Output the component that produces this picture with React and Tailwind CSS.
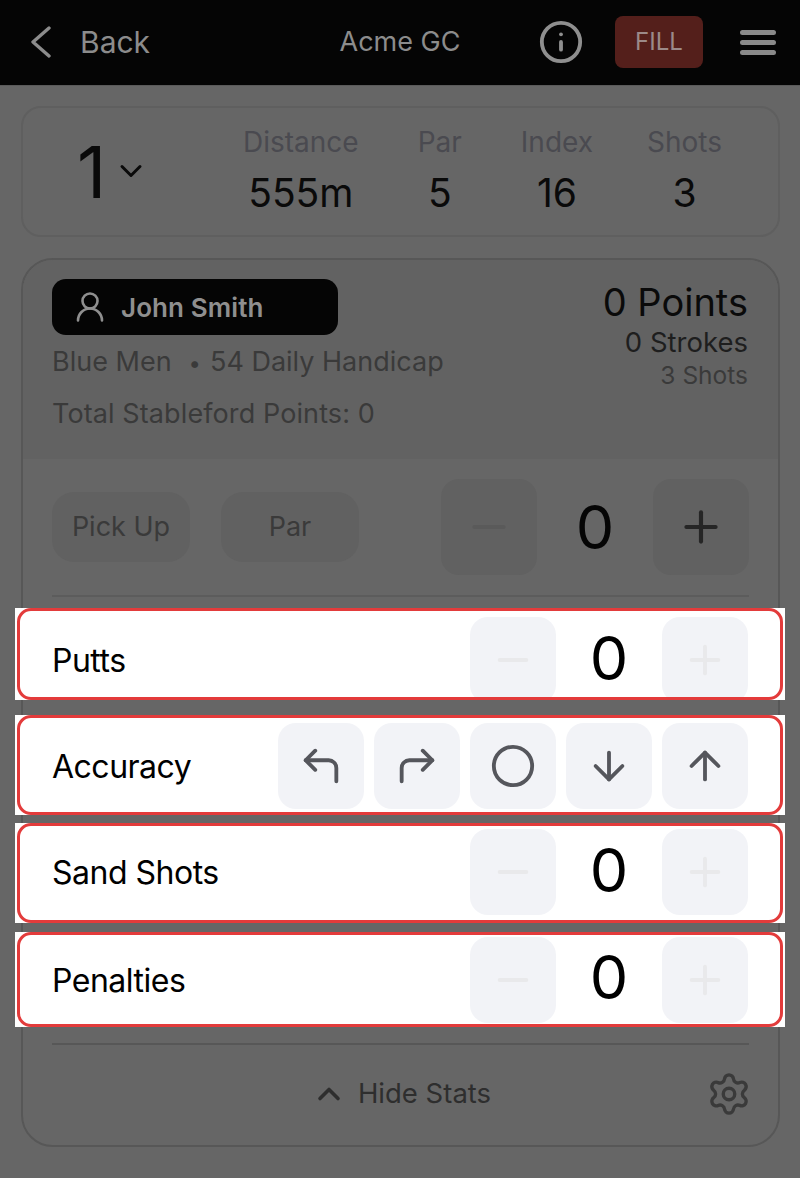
import React from 'react';
import { ChevronDown, ChevronUp, Info, UserRound, Minus, Plus, CornerUpLeft, CornerUpRight, Circle, ArrowDown, ArrowUp, Settings } from 'lucide-react';

const stats = [
  { label: 'Distance', value: '555m' },
  { label: 'Par', value: '5' },
  { label: 'Index', value: '16' },
  { label: 'Shots', value: '3' },
];

const StepButton = ({ icon: Icon, color = 'text-[#e9e9eb]' }) => (
  <div className="w-[86px] h-[86px] shrink-0 rounded-[18px] bg-[#f2f3f7] flex items-center justify-center">
    <Icon size={46} strokeWidth={2} className={color} />
  </div>
);

const CounterRow = ({ label, className, inner = '' }) => (
  <div className={`-ml-[37px] -mr-[36px] px-[2px] bg-white ${className}`}>
    <div className={`h-full rounded-[14px] border-[3px] border-[#e33b3b] pl-[32px] pr-[32px] flex items-center justify-between overflow-hidden ${inner}`}>
      <span className="text-[32px] text-black tracking-[-0.5px] mt-[2px]">{label}</span>
      <div className="flex items-center">
        <StepButton icon={Minus} />
        <span className="w-[106px] text-center text-[61px] leading-none text-black -mt-[4px]">0</span>
        <StepButton icon={Plus} />
      </div>
    </div>
  </div>
);

export default function App() {
  return (
    <div className="w-[800px] h-[1178px] bg-[#666666] font-['Inter',sans-serif] overflow-hidden">
      {/* Header */}
      <header className="h-[86px] bg-[#050505] border-b border-[#5a5a5a] grid grid-cols-[1fr_auto_1fr] items-center pb-[1px]">
        <div className="flex items-center pl-[30px] text-[#8c8c8c]">
          <svg width="21" height="32" viewBox="0 0 21 32" fill="none" stroke="currentColor" strokeWidth="3.4" strokeLinecap="round" strokeLinejoin="round">
            <path d="M19 2 3 16l16 14" />
          </svg>
          <span className="ml-[29px] text-[30px]">Back</span>
        </div>
        <span className="text-[27px] text-[#8c8c8c]">Acme GC</span>
        <div className="flex items-center justify-end pr-[24px]">
          <Info size={46} strokeWidth={2} className="text-[#8f8f8f]" />
          <div className="ml-[31px] w-[88px] h-[52px] rounded-[8px] bg-[#541f1b] flex items-center justify-center text-[24px] text-[#9c8a89]">FILL</div>
          <svg width="36" height="25" viewBox="0 0 36 25" fill="none" stroke="#8a8a8a" strokeWidth="5" strokeLinecap="round" className="ml-[37px]">
            <path d="M2.5 2.5h31M2.5 12.5h31M2.5 22.5h31" />
          </svg>
        </div>
      </header>

      <main className="pl-[21px] pr-[20px] pt-[20px]">
        {/* Hole summary */}
        <section className="h-[131px] rounded-[20px] border-2 border-[#5f5f5f] flex items-center justify-between pr-[56px]">
          <div className="flex items-center pl-[54px]">
            <span className="text-[72px] leading-none text-[#0a0a0a]">1</span>
            <ChevronDown size={36} strokeWidth={2} className="ml-[7px] -mt-[2px] text-[#0a0a0a]" />
          </div>
          <div className="flex gap-[59px] mb-[3px]">
            {stats.map((s) => (
              <div key={s.label} className="flex flex-col items-center last:-ml-[5px]">
                <span className="text-[28px] text-[#4a4a50] leading-[34px]">{s.label}</span>
                <span className="text-[39px] text-[#0a0a0a] leading-[46px] mt-[11px]">{s.value}</span>
              </div>
            ))}
          </div>
        </section>

        {/* Player card */}
        <section className="mt-[21px] h-[889px] rounded-[32px] border-2 border-[#575757]">
          <div className="h-[199px] rounded-t-[30px] bg-[#626262] pl-[29px] pr-[30px] pt-[19px] flex justify-between">
            <div>
              <div className="w-[286px] h-[56px] rounded-[14px] bg-[#050505] flex items-center pl-[20px] text-[#8f8f8f]">
                <UserRound size={36} strokeWidth={1.75} />
                <span className="ml-[13px] text-[26px] font-semibold tracking-[0.1px]">John Smith</span>
              </div>
              <div className="mt-[10px] text-[27px] text-[#3a3a3a] leading-[34px]">Blue Men<span className="ml-[17px] text-[22px]">•</span><span className="ml-[9px]">54 Daily Handicap</span></div>
              <div className="mt-[17px] text-[27px] text-[#3a3a3a] leading-[34px] tracking-[0.1px]">Total Stableford Points: 0</div>
            </div>
            <div className="flex flex-col items-end">
              <span className="text-[38px] leading-[46px] text-[#0a0a0a]">0 Points</span>
              <span className="text-[27.5px] leading-[34px] text-[#1e1e1e]">0 Strokes</span>
              <span className="text-[24.5px] leading-[28px] text-[#3a3a3a] mt-[2px]">3 Shots</span>
            </div>
          </div>

          <div className="px-[29px]">
            <div className="h-[138px] border-b-2 border-[#5c5c5c] flex items-center justify-between">
              <div className="flex gap-[31px]">
                <div className="w-[138px] h-[70px] rounded-[22px] bg-[#616161] flex items-center justify-center text-[27px] text-[#3a3a3a]">Pick Up</div>
                <div className="w-[138px] h-[70px] rounded-[22px] bg-[#616161] flex items-center justify-center text-[27px] text-[#3a3a3a]">Par</div>
              </div>
              <div className="flex items-center">
                <div className="w-[96px] h-[96px] rounded-[18px] bg-[#616161] flex items-center justify-center">
                  <Minus size={50} strokeWidth={2} className="text-[#5a5a5a]" />
                </div>
                <span className="w-[116px] text-center text-[61px] leading-none text-[#050505]">0</span>
                <div className="w-[96px] h-[96px] rounded-[18px] bg-[#616161] flex items-center justify-center">
                  <Plus size={50} strokeWidth={2} className="text-[#262626]" />
                </div>
              </div>
            </div>

            <CounterRow label="Putts" className="h-[92px] mt-[11px]" inner="pt-[12px]" />

            <div className="-ml-[37px] -mr-[36px] mt-[15px] h-[100px] px-[2px] bg-white">
              <div className="h-full rounded-[14px] border-[3px] border-[#e33b3b] pl-[32px] pr-[32px] pt-[1px] flex items-center justify-between">
                <span className="text-[32px] text-black tracking-[-0.5px] mt-[2px]">Accuracy</span>
                <div className="flex gap-[10px]">
                  <StepButton icon={CornerUpLeft} color="text-[#55565c]" />
                  <StepButton icon={CornerUpRight} color="text-[#55565c]" />
                  <StepButton icon={Circle} color="text-[#55565c]" />
                  <StepButton icon={ArrowDown} color="text-[#55565c]" />
                  <StepButton icon={ArrowUp} color="text-[#55565c]" />
                </div>
              </div>
            </div>

            <CounterRow label="Sand Shots" className="h-[100px] mt-[8px]" inner="pb-[2px]" />
            <CounterRow label="Penalties" className="h-[95px] mt-[9px]" />

            <div className="mt-[16px] border-t-2 border-[#575757] h-[100px] flex items-center relative">
              <div className="flex-1 flex items-center justify-center text-[#2e2e2e] text-[27.5px] pl-[1px]">
                <ChevronUp size={36} strokeWidth={2.4} />
                <span className="ml-[11px]">Hide Stats</span>
              </div>
              <Settings size={46} strokeWidth={1.75} className="absolute -right-[3px] text-[#3a3a3a]" />
            </div>
          </div>
        </section>
      </main>
    </div>
  );
}
